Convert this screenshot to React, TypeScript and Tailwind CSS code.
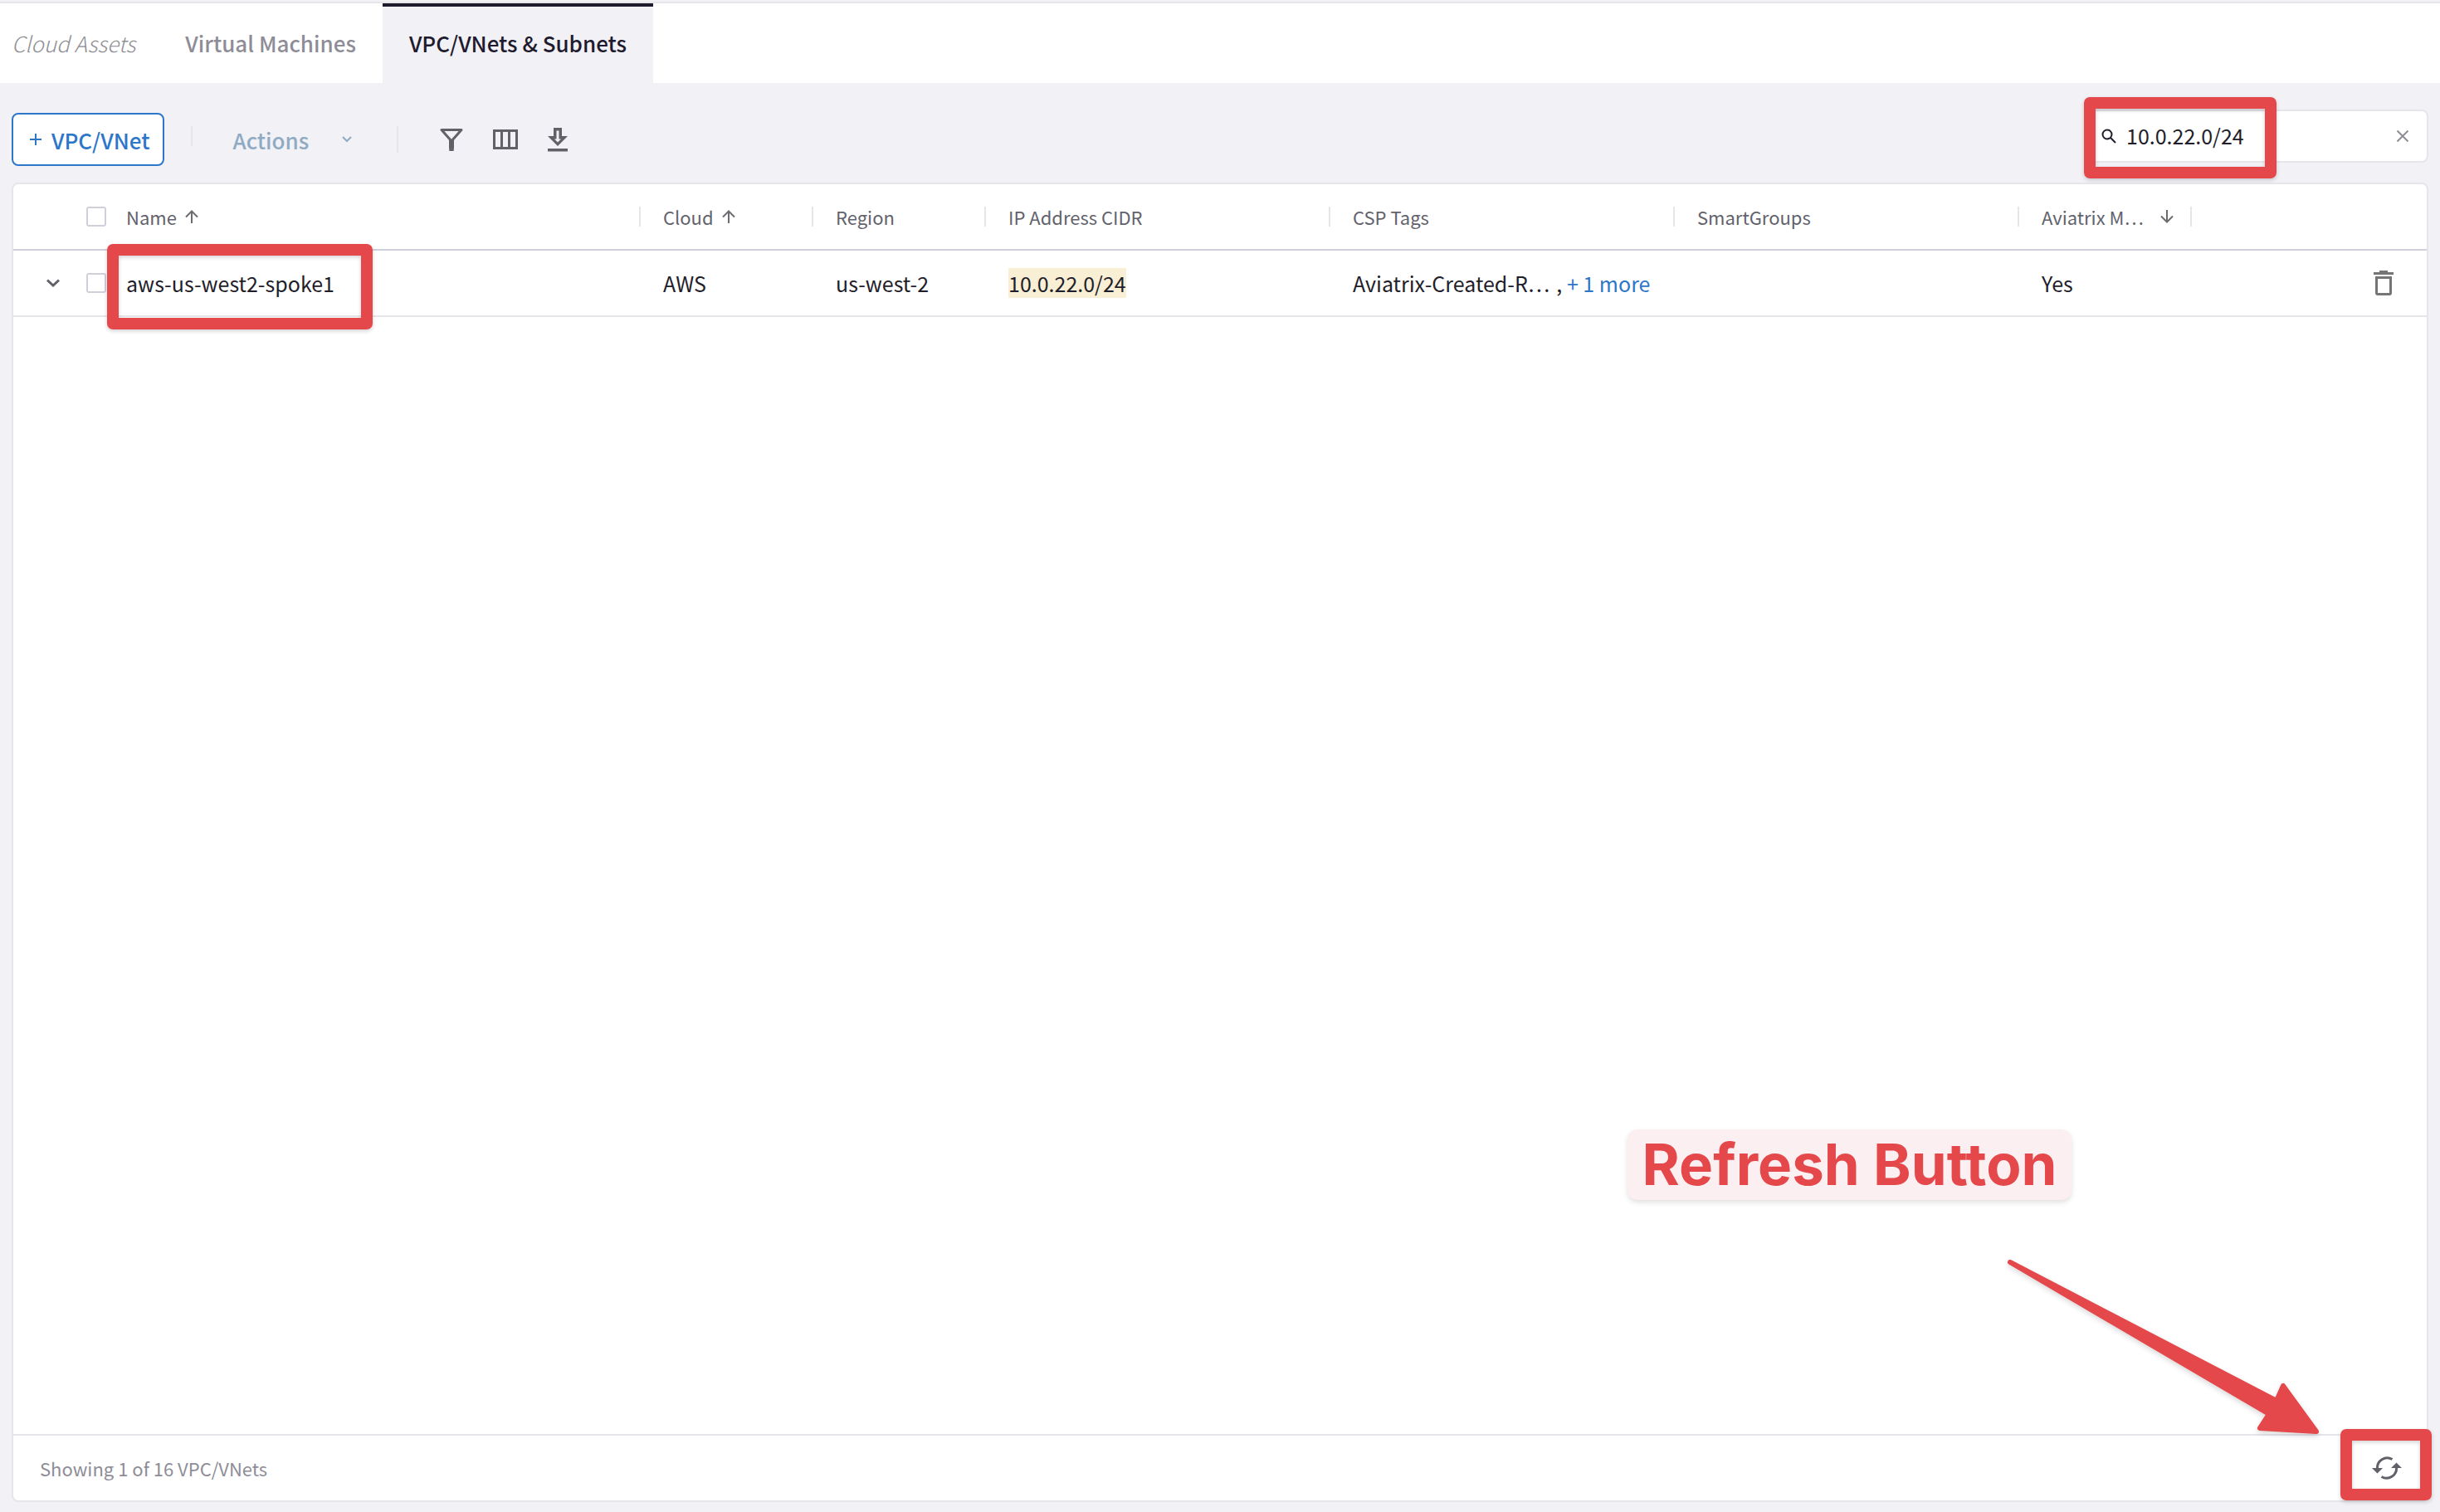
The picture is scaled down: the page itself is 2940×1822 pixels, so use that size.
import type { ReactNode } from "react";

const FONT = "font-['Noto_Sans_CJK_SC',sans-serif]";

function ArrowUp() {
  return (
    <svg viewBox="0 0 16 16" className="size-4 shrink-0" fill="none" stroke="#6b6b70" strokeWidth="2" aria-hidden="true">
      <path d="M8 16V1.5M1 8.5L8 1.5l7 7" />
    </svg>
  );
}

function ArrowDown() {
  return (
    <svg viewBox="0 0 16 16" className="size-4 shrink-0" fill="none" stroke="#6b6b70" strokeWidth="2" aria-hidden="true">
      <path d="M8 0v14.5M1 7.5l7 7 7-7" />
    </svg>
  );
}

function Th({ label, icon, spread }: { label: string; icon?: ReactNode; spread?: boolean }) {
  return (
    <th scope="col" className="p-0 text-left font-normal">
      <div className={spread ? "flex h-6 items-center justify-between border-l-2 border-[#e5e5ea] pl-[27px] pr-5" : "flex h-6 items-center gap-2.5 border-l-2 border-[#e5e5ea] pl-[27px]"}>
        <span className="truncate leading-8">{label}</span>
        {icon}
      </div>
    </th>
  );
}

function Frame({ className }: { className: string }) {
  return (
    <div
      className={`pointer-events-none absolute rounded-[7px] border-[14px] border-[#e5484b] shadow-[0_2px_5px_rgba(0,0,0,0.18),inset_0_2px_5px_rgba(0,0,0,0.18)] ${className}`}
    />
  );
}

const box = "block size-6 appearance-none rounded-[3px] border-2 border-[#d0d0da] bg-white";

export default function App() {
  return (
    <div className={`relative flex min-h-screen flex-col bg-[#f2f1f6] text-[#1f1e2a] ${FONT}`}>
      <nav className="mt-0.5 flex h-[98px] border-t-2 border-[#e5e5ea] bg-white text-[26px] leading-9">
        <span className="flex items-center pl-3.5 pr-7 font-light italic text-[#8f8f94]">Cloud Assets</span>
        <a href="#vms" className="flex items-center px-8 font-medium text-[#8e8d97]">Virtual Machines</a>
        <a href="#vpcs" aria-current="page" className="flex items-center border-t-4 border-[#1f1b2e] bg-[#f2f1f6] px-8 pb-1 font-medium text-[#1f1b2e]">
          VPC/VNets &amp; Subnets
        </a>
      </nav>

      <div className="flex h-[120px] items-center px-3.5">
        <button className="mt-4 flex h-16 items-center gap-3 rounded-lg border-2 border-[#2e76c8] bg-white px-4 text-[26px] font-medium text-[#2e76c8]">
          <svg viewBox="0 0 14 14" className="ml-1 size-3.5" stroke="currentColor" strokeWidth="2" aria-hidden="true">
            <path d="M7 0v14M0 7h14" />
          </svg>
          VPC/VNet
        </button>
        <span className="ml-8 mt-2 h-6 w-0.5 bg-[#e5e5ea]" />
        <button className="ml-12 mt-4 flex items-center text-[26px] font-medium text-[#8fabc3]">
          Actions
          <svg viewBox="0 0 12 8" className="ml-10 h-2 w-3" fill="none" stroke="currentColor" strokeWidth="2" aria-hidden="true">
            <path d="M1 1l5 5 5-5" />
          </svg>
        </button>
        <span className="ml-[54px] mt-4 h-8 w-0.5 bg-[#e5e5ea]" />
        <div className="ml-[50px] mt-4 flex items-center gap-9 text-[#626168]">
          <button aria-label="Filter">
            <svg viewBox="0 0 28 28" className="size-7" fill="none" stroke="currentColor" strokeWidth="3">
              <path d="M2 2.500h24L14 16z" strokeLinejoin="round" />
              <path d="M14 14v11.500" strokeWidth="6" />
              <path d="M12.500 26.500h3" strokeLinecap="round" />
            </svg>
          </button>
          <button aria-label="Columns">
            <svg viewBox="0 0 30 24" className="h-6 w-[30px]" fill="none" stroke="currentColor" strokeWidth="3">
              <path d="M1.500 1.500h27v21h-27zM10.500 1.500v21M19.500 1.500v21" />
            </svg>
          </button>
          <button aria-label="Download">
            <svg viewBox="0 0 24 29" className="h-[29px] w-6" fill="currentColor">
              <path fillRule="evenodd" d="M7 0h10v10h7L12 22 0 10h7zM10.500 3.500v10H8l4 4 4-4h-2.500v-10z" />
              <path d="M0 25h24v3.500H0z" />
            </svg>
          </button>
        </div>
        <label className="ml-auto mt-2 flex h-16 w-[412px] items-center rounded-lg border-2 border-[#e5e5ea] bg-white pl-4 pr-[22px]">
          <svg viewBox="0 0 18 18" className="size-[18px] shrink-0" fill="none" stroke="#1f1e2a" strokeWidth="2" aria-hidden="true">
            <path d="M10.500 10.500l6.500 6.500" />
            <circle cx="7" cy="7" r="5.500" />
          </svg>
          <input aria-label="Search" defaultValue="10.0.22.0/24" className="ml-3 w-0 flex-1 bg-transparent text-[25px] outline-none" />
          <button aria-label="Clear search">
            <svg viewBox="0 0 14 14" className="size-3.5" stroke="#8e8d97" strokeWidth="2">
              <path d="M.5.5l13 13M13.500.5l-13 13" />
            </svg>
          </button>
        </label>
      </div>

      <main className="mx-3.5 mb-3 flex flex-1 flex-col rounded-lg border-2 border-[#e5e5ea] bg-white">
        <table className="w-full table-fixed border-collapse">
          <colgroup>
            <col className="w-[88px]" />
            <col className="w-[48px]" />
            <col />
            <col className="w-[208px]" />
            <col className="w-[208px]" />
            <col className="w-[415px]" />
            <col className="w-[415px]" />
            <col className="w-[415px]" />
            <col className="w-[208px]" />
            <col className="w-[285px]" />
          </colgroup>
          <thead className="text-[22px] text-[#62626c]">
            <tr className="h-[79px] border-b-2 border-[#d0d0da]">
              <td />
              <td className="p-0"><input type="checkbox" aria-label="Select all" className={box} /></td>
              <th scope="col" className="p-0 text-left font-normal">
                <div className="flex h-6 items-center gap-2.5">Name <ArrowUp /></div>
              </th>
              <Th label="Cloud" icon={<ArrowUp />} />
              <Th label="Region" />
              <Th label="IP Address CIDR" />
              <Th label="CSP Tags" />
              <Th label="SmartGroups" />
              <Th label="Aviatrix M…" icon={<ArrowDown />} spread />
              <td className="p-0"><div className="h-6 border-l-2 border-[#e5e5ea]" /></td>
            </tr>
          </thead>
          <tbody className="text-[25px] leading-9">
            <tr className="h-20 border-b-2 border-[#e5e5ea]">
              <td className="p-0">
                <button aria-label="Expand row" className="ml-10 block">
                  <svg viewBox="0 0 16 10" className="h-2.5 w-4" fill="none" stroke="#626168" strokeWidth="3">
                    <path d="M1 1.500l7 6.500 7-6.500" />
                  </svg>
                </button>
              </td>
              <td className="p-0"><input type="checkbox" aria-label="Select aws-us-west2-spoke1" className={box} /></td>
              <td className="p-0">aws-us-west2-spoke1</td>
              <td className="p-0 pl-[29px]">AWS</td>
              <td className="p-0 pl-[29px]">us-west-2</td>
              <td className="p-0 pl-[29px]"><mark className="inline-block bg-[#f8efd5] text-inherit">10.0.22.0/24</mark></td>
              <td className="p-0 pl-[29px]">
                <div className="flex gap-2 whitespace-nowrap">
                  <span>Aviatrix-Created-R…</span>
                  <span>, <a href="#tags" className="text-[#2e76c8]">+ 1 more</a></span>
                </div>
              </td>
              <td />
              <td className="p-0 pl-[29px]">Yes</td>
              <td className="p-0">
                <button aria-label="Delete" className="ml-auto mr-10 block">
                  <svg viewBox="0 0 24 30" className="h-[30px] w-6" fill="none" stroke="#757575" strokeWidth="3">
                    <path d="M3.500 8.500h17v18.500a1.500 1.500 0 0 1-1.500 1.500H5a1.500 1.500 0 0 1-1.500-1.500z" />
                    <path d="M0 3.500h24M7 1.500h10" />
                  </svg>
                </button>
              </td>
            </tr>
          </tbody>
        </table>
        <footer className="mt-auto flex h-20 items-center justify-between border-t-2 border-[#e5e5ea] pl-8 pr-[30px] text-[22px] leading-8 text-[#8e8d97]">
          <span>Showing 1 of 16 VPC/VNets</span>
          <button aria-label="Refresh">
            <svg viewBox="0 0 36 28" className="h-7 w-9" fill="none" stroke="#626168" strokeWidth="3">
              <path d="M24.500 3.500A12 12 0 0 0 6.500 15M11.500 24.500A12 12 0 0 0 29.500 13" />
              <path d="M0 14h13l-6.500 6.500zM36 14H23l6.500-6.500z" fill="#626168" stroke="none" />
            </svg>
          </button>
        </footer>
      </main>

      <Frame className="left-[129px] top-[294px] h-[103px] w-[320px]" />
      <Frame className="right-[197px] top-[117px] h-[98px] w-[232px]" />
      <Frame className="bottom-[14px] right-2.5 h-[86px] w-[110px]" />
      <div className="absolute bottom-[376px] right-[444px] flex h-[85px] w-[535px] items-center justify-center whitespace-nowrap rounded-xl bg-[#fbeff1] font-['Inter',sans-serif] text-[69px] font-bold text-[#e5484b] shadow-[0_3px_6px_rgba(0,0,0,0.12)]">
        Refresh Button
      </div>
      <svg viewBox="0 0 400 230" className="pointer-events-none absolute bottom-[82px] right-[130px] h-[230px] w-[400px] drop-shadow-[0_3px_3px_rgba(0,0,0,0.15)]" aria-hidden="true">
        <path
          d="M12 11L324 194 313 211 381 215 341 160 333 178z"
          fill="#e5484b"
          stroke="#e5484b"
          strokeWidth="6"
          strokeLinejoin="round"
        />
      </svg>
    </div>
  );
}
